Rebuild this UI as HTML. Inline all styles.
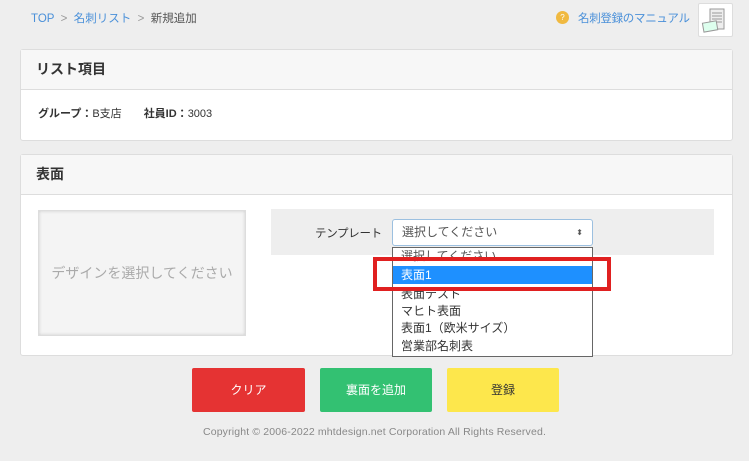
<!DOCTYPE html>
<html><head><meta charset="utf-8"><style>
body{margin:0;width:749px;height:461px;background:#eeeeee;font-family:"Liberation Sans","Noto Sans CJK JP",sans-serif;position:relative;overflow:hidden;color:#333}
.a{position:absolute}
.card{position:absolute;left:20px;width:713px;background:#fff;border:1px solid #ddd;border-radius:3px;box-sizing:border-box}
.hd{height:39px;background:#f7f7f7;border-bottom:1px solid #ddd;font-size:14px;font-weight:bold;line-height:39px;padding-left:15px}
.opt{position:absolute;left:8px;font-size:12px;line-height:18px}
.btn{position:absolute;top:368px;height:44px;line-height:44px;text-align:center;font-size:12px;border-radius:2px}
</style></head><body>
<div class="a" style="left:31px;top:10px;font-size:11.5px;color:#4a90d9">TOP <span style="color:#999">&nbsp;&gt;&nbsp;</span> 名刺リスト <span style="color:#999">&nbsp;&gt;&nbsp;</span> <span style="color:#555">新規追加</span></div>
<div class="a" style="left:556px;top:11px;width:13px;height:13px;border-radius:50%;background:#f0b940;color:#fff;font-size:8px;text-align:center;line-height:13px">?</div>
<div class="a" style="left:578px;top:10px;font-size:11.5px;color:#4a90d9;letter-spacing:-0.3px">名刺登録のマニュアル</div>
<div class="a" style="left:698px;top:3px;width:33px;height:32px;background:#fff;border:1px solid #ddd;border-radius:2px">
<svg width="33" height="32"><rect x="11" y="5" width="14" height="20" fill="#eee" stroke="#999"/><path d="M13 9h10M13 12h10M13 15h10M13 18h10" stroke="#999"/><rect x="4" y="18" width="14" height="9" fill="#dfe" stroke="#999" transform="rotate(-10 11 22)"/></svg></div>
<div class="card" style="top:49px;height:92px"><div class="hd">リスト項目</div>
<div class="a" style="left:17px;top:55px;font-size:11px"><b>グループ：</b>B支店　　<b>社員ID：</b>3003</div></div>
<div class="card" style="top:154px;height:202px"><div class="hd">表面</div></div>
<div class="a" style="left:38px;top:210px;width:208px;height:126px;background:#f4f4f4;border:1px solid #ddd;box-sizing:border-box;box-shadow:inset 0 0 3px #ccc;text-align:center;line-height:124px;font-size:14px;color:#aaa">デザインを選択してください</div>
<div class="a" style="left:271px;top:209px;width:443px;height:46px;background:#eee"></div>
<div class="a" style="left:315px;top:225px;font-size:11.5px;letter-spacing:-0.3px">テンプレート</div>
<div class="a" style="left:392px;top:219px;width:201px;height:27px;background:#fff;border:1px solid #9cc0e0;border-radius:3px;box-sizing:border-box;font-size:12px;line-height:25px;padding-left:9px;color:#555">選択してください<span style="position:absolute;right:9px;font-size:8px">⬍</span></div>
<div class="a" style="left:392px;top:247px;width:201px;height:110px;background:#fff;border:1px solid #666;box-sizing:border-box;overflow:hidden">
<div class="opt" style="top:-1px;color:#555">選択してください</div>
<div class="a" style="left:0;top:18px;width:199px;height:18px;background:#1e90ff"></div>
<div class="opt" style="top:18px;color:#fff">表面1</div>
<div class="opt" style="top:37px">表面テスト</div>
<div class="opt" style="top:54px">マヒト表面</div>
<div class="opt" style="top:71px">表面1（欧米サイズ）</div>
<div class="opt" style="top:89px">営業部名刺表</div></div>
<div class="a" style="left:373px;top:257px;width:238px;height:34px;border:4px solid #e02020;box-sizing:border-box"></div>
<div class="btn" style="left:192px;width:113px;background:#e53333;color:#fff">クリア</div>
<div class="btn" style="left:320px;width:112px;background:#33c172;color:#fff">裏面を追加</div>
<div class="btn" style="left:447px;width:112px;background:#fde74c;color:#333">登録</div>
<div class="a" style="left:0;width:749px;top:426px;text-align:center;font-size:10.5px;letter-spacing:0.15px;color:#888">Copyright © 2006-2022 mhtdesign.net Corporation All Rights Reserved.</div>
</body></html>
